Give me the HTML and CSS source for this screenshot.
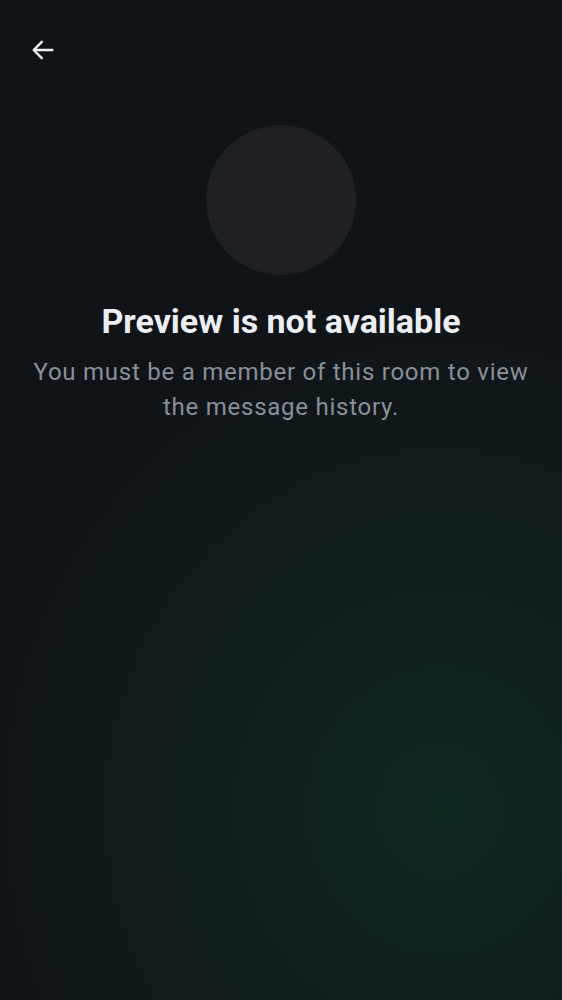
FILE: index.html
```html
<!DOCTYPE html>
<html>
<head>
<meta charset="utf-8">
<link rel="stylesheet" href="styles.css">
</head>
<body>
<div class="screen">
  <header class="topbar">
    <button class="back" aria-label="Back">
      <svg width="28" height="28" viewBox="0 0 24 24"><path d="M20 12H4.5M11 5l-7 7 7 7" fill="none" stroke="#f0f2f5" stroke-width="2.1" stroke-linecap="round" stroke-linejoin="round"/></svg>
    </button>
  </header>
  <main class="content">
    <div class="avatar"></div>
    <h1 class="title">Preview is not available</h1>
    <p class="subtitle">You must be a member of this room to view the message history.</p>
  </main>
</div>
</body>
</html>
```
FILE: styles.css
```css
html, body {
  margin: 0;
  padding: 0;
}
body {
  width: 562px;
  height: 1000px;
  overflow: hidden;
  font-family: Roboto, "Noto Sans", sans-serif;
  background: #101318;
}
.screen {
  width: 562px;
  height: 1000px;
  background:
    radial-gradient(ellipse 520px 560px at 440px 810px, rgba(16, 38, 33, 1) 0%, rgba(16, 33, 31, 0.7) 40%, rgba(16, 19, 24, 0) 100%),
    #101318;
  display: flex;
  flex-direction: column;
}
.topbar {
  height: 100px;
  display: flex;
  align-items: center;
  padding-left: 29px;
}
.back {
  background: none;
  border: 0;
  padding: 0;
  width: 28px;
  height: 28px;
  display: flex;
  cursor: pointer;
}
.content {
  display: flex;
  flex-direction: column;
  align-items: center;
  padding: 25px 20px 0;
}
.avatar {
  width: 150px;
  height: 150px;
  border-radius: 50%;
  background: #1f2024;
}
.title {
  margin: 26px 0 0;
  font-size: 34px;
  line-height: 40px;
  font-weight: 700;
  color: #eceef1;
  text-align: center;
}
.subtitle {
  margin: 14px 0 0;
  font-size: 24px;
  line-height: 35px;
  color: #8a909a;
  text-align: center;
  letter-spacing: 0.75px;
}
```
